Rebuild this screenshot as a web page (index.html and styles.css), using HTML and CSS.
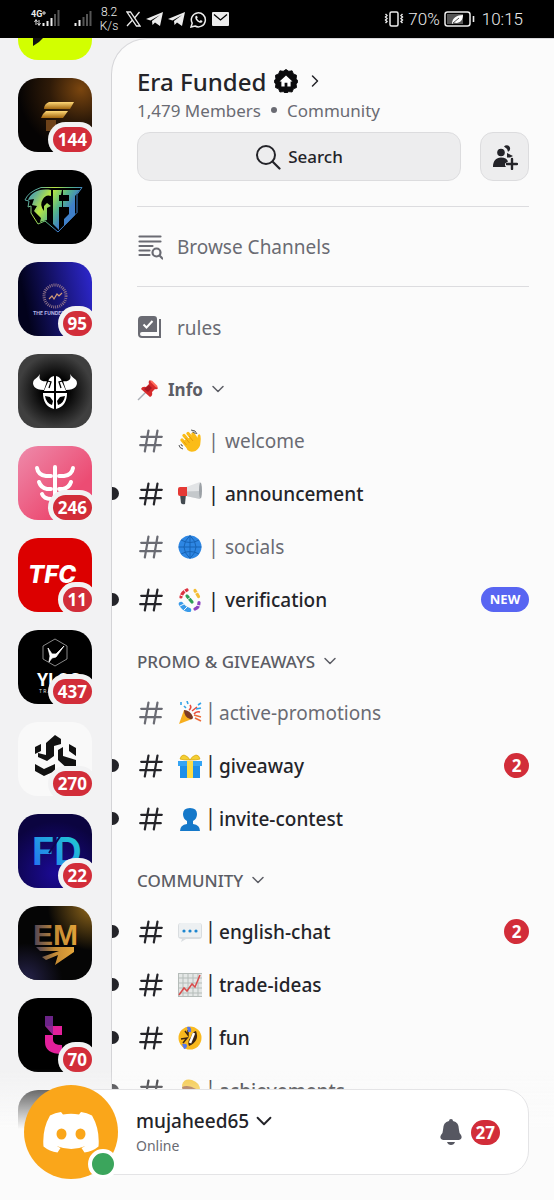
FILE: index.html
```html
<!DOCTYPE html>
<html lang="en">
<head>
  <meta charset="UTF-8" />
  <meta name="viewport" content="width=device-width, initial-scale=1.0"/>
  <title>Era Funded</title>
  <link rel="stylesheet" href="styles.css">
</head>
<body>
  <!-- shared icons -->
  <svg class="sprite" aria-hidden="true">
    <symbol id="hash" viewBox="0 0 24 24">
      <path d="M9.500 1.500 5.800 22.500M18.500 1.500 14.800 22.500M2.200 7.800h20.600M1.200 16.200h20.600" fill="none" stroke="currentColor" stroke-width="2.200" stroke-linecap="round"/>
    </symbol>
    <symbol id="chevron" viewBox="0 0 14 14">
      <path d="M2 4.500 7 9.500 12 4.500" fill="none" stroke="currentColor" stroke-width="1.500" stroke-linecap="round" stroke-linejoin="round"/>
    </symbol>
    <symbol id="plane" viewBox="0 0 17 16">
      <path d="M0 8 17 1 14 15 9 11.500 6.500 14 6 10 14 4 4.500 9.500Z" fill="currentColor"/>
    </symbol>
  </svg>

  <header class="statusbar">
    <svg class="signal" width="32" height="20" viewBox="0 0 32 20">
      <text x="1" y="8" class="net">4G</text>
      <path d="M14 2v4M12 4h4" stroke="#ddd" stroke-width="1"/>
      <path d="M6 11v5M4.500 13 6 10.500 7.500 13M9 11v5M7.500 14 9 16.500 10.500 14" fill="none" stroke="#ddd" stroke-width="1"/>
      <path d="M13.500 14v3M17.500 12v5M21.500 9v8" stroke="#ececec" stroke-width="2"/>
      <path d="M25 5v12M28.500 1v16" stroke="#555" stroke-width="2"/>
    </svg>
    <svg class="signal2" width="18" height="18" viewBox="0 0 18 18">
      <path d="M1.500 13v3M5.500 10v6" stroke="#ececec" stroke-width="2"/>
      <path d="M9.500 7v9M13 4v12M16.500 1v15" stroke="#555" stroke-width="2"/>
    </svg>
    <div class="speed">8.2<br>K/s</div>
    <svg width="15" height="16" viewBox="0 0 15 16"><path d="M1 1h3.500L14 15h-3.500ZM13.500 1 8.500 7M6.500 9 1 15" fill="none" stroke="#ececec" stroke-width="1.300"/></svg>
    <svg width="17" height="16"><use href="#plane"/></svg>
    <svg width="17" height="16"><use href="#plane"/></svg>
    <svg width="17" height="17" viewBox="0 0 17 17">
      <path d="M1 16 2.200 12.200A7 7 0 1 1 5 15Z" fill="none" stroke="#ececec" stroke-width="1.500"/>
      <path d="M6 4.800C4.500 5.600 5.500 8.600 7 10c1.600 1.600 4.500 2.600 5.300 1 .5-1-.4-1.300-1.500-1.900L9.800 10C8.500 9.500 7.600 8.600 7 7.400l.7-.9C7.200 5.200 7 4.400 6 4.800Z" fill="#ececec"/>
    </svg>
    <svg width="17" height="14" viewBox="0 0 17 14"><rect width="17" height="14" rx="1" fill="#ececec"/><path d="M2 2.500 8.500 8 15 2.500" fill="none" stroke="#000" stroke-width="1.300"/></svg>
    <div class="status-right">
      <svg width="20" height="18" viewBox="0 0 20 18">
        <rect x="6" y="2" width="8" height="14" rx="1.500" fill="none" stroke="#ececec" stroke-width="1.500"/>
        <path d="M1.500 4 3 5.500 1.500 7 3 8.500 1.500 10 3 11.500 1.500 13M18.500 4 17 5.500l1.500 1.500L17 8.500l1.500 1.500-1.500 1.500 1.500 1.500" fill="none" stroke="#ececec" stroke-width="1.400"/>
      </svg>
      <span>70%</span>
      <svg width="31" height="16" viewBox="0 0 31 16">
        <rect x="1" y="1" width="25" height="14" rx="2.500" fill="none" stroke="#ececec" stroke-width="1.500"/>
        <rect x="3" y="3" width="16" height="10" fill="#555"/>
        <path d="M8 13C8 7 13 4 19 4 19 10 15 13 10 11.500Z" fill="#fff"/>
        <path d="m9 12 6-5" stroke="#555"/>
        <path d="M29.500 5v6" stroke="#ececec" stroke-width="1.600"/>
      </svg>
      <span class="clock">10:15</span>
    </div>
  </header>

  <main class="app">
    <nav class="servers" aria-label="Servers">
      <a href="#" class="server" aria-label="Server 1">
        <svg viewBox="0 0 74 74"><rect width="74" height="74" fill="#d2ff00"/><path d="M15 50h12l-6 6-6 4Z" fill="#111"/></svg>
      </a>
      <a href="#" class="server" aria-label="Server 2">
        <svg viewBox="0 0 74 74">
          <defs>
            <radialGradient id="g2" cx=".85" cy=".15" r=".85"><stop offset="0" stop-color="#7b460f"/><stop offset=".5" stop-color="#2e1a08"/><stop offset="1" stop-color="#050303"/></radialGradient>
            <linearGradient id="gold" x1="0" y1="0" x2="0" y2="1"><stop offset="0" stop-color="#ffd978"/><stop offset="1" stop-color="#a2660f"/></linearGradient>
          </defs>
          <rect width="74" height="74" fill="url(#g2)"/>
          <path d="M31 24h25l-4 7H26q0-5 5-7Z" fill="url(#gold)"/>
          <path d="M28 33h22l-5 7H23q2-5 5-7Z" fill="url(#gold)"/>
          <path d="M28 42h10v6l-4 5h-6Z" fill="#6e4219"/>
        </svg>
        <span class="badge">144</span>
      </a>
      <a href="#" class="server" aria-label="GFE">
        <svg viewBox="0 0 74 74">
          <defs><linearGradient id="g3" gradientUnits="userSpaceOnUse" x1="12" y1="20" x2="58" y2="50"><stop offset=".1" stop-color="#5aa9a0"/><stop offset=".35" stop-color="#b9e642"/><stop offset=".6" stop-color="#55b58a"/><stop offset=".8" stop-color="#3f7fc9"/></linearGradient></defs>
          <rect width="74" height="74" fill="#000"/>
          <path d="M23 17.500h41l-5 7v18L40 62 27 51l-7 3-7-11V36l-3 1 1-6-4-1q3-8 16-12.500Z" fill="none" stroke="url(#g3)" stroke-width="1"/>
          <path d="M33 20C20 18 13 23 10 30l6-1-2 6 5 1-3 5 7 7-1 4 7-2V38l4-2-4-3-3 3v5q-5-6-1-12 3-5 8-3Z" fill="url(#g3)"/>
          <path d="M35 20h9l-1 5h-2v6h3v6h-3v23l-6-6Z" fill="url(#g3)"/>
          <path d="M45 20h17l-5 6v19l-11 11v-7l5-5v-7h-6v-6h6v-6h-6Z" fill="url(#g3)"/>
        </svg>
      </a>
      <a href="#" class="server" aria-label="The Funded">
        <svg viewBox="0 0 74 74">
          <defs><linearGradient id="g4" x1="0" y1=".6" x2="1" y2=".4"><stop offset=".1" stop-color="#02021c"/><stop offset="1" stop-color="#2b25c4"/></linearGradient></defs>
          <rect width="74" height="74" fill="url(#g4)"/>
          <circle cx="37" cy="34" r="11" fill="none" stroke="#8d7188" stroke-width="3" stroke-dasharray="1 1"/>
          <path d="m31 37 3-3 2 3 3-5 2 2 3-3" fill="none" stroke="#d49b76" stroke-width="1.200"/>
          <text x="15" y="53" font-size="5" fill="#b9b7e6" font-weight="700" font-family="Inter, sans-serif">THE FUNDED</text>
        </svg>
        <span class="badge">95</span>
      </a>
      <a href="#" class="server" aria-label="Viking">
        <svg viewBox="0 0 74 74">
          <defs><radialGradient id="g5"><stop offset=".35" stop-color="#000"/><stop offset="1" stop-color="#3f3f3f"/></radialGradient></defs>
          <rect width="74" height="74" fill="url(#g5)"/>
          <path d="M22 20c-2 6 2 8 7 7l-3 9c-9 0-13-5-10-10 2-2 4-3 6-6ZM52 20c2 6-2 8-7 7l3 9c9 0 13-5 10-10-2-2-4-3-6-6Z" fill="#fff"/>
          <path d="M36 22v15H26q2-5 4-9 1-5 6-6ZM38 22v15h10q-2-5-4-9-1-5-6-6Z" fill="#fff"/>
          <path d="m26 26 7 2-2 6M48 26l-7 2 2 6" fill="none" stroke="#000" stroke-width="1.300"/>
          <path d="M25 39h11v16c-8-2-11-8-11-16ZM49 39H38v16c8-2 11-8 11-16Z" fill="#fff"/>
          <path d="m27 42 5 1 3 4-1 4q-6-2-7-9ZM47 42l-5 1-3 4 1 4q6-2 7-9Z" fill="#000"/>
        </svg>
      </a>
      <a href="#" class="server" aria-label="Server 6">
        <svg viewBox="0 0 74 74">
          <defs><linearGradient id="g6" x1="0" y1="0" x2="1" y2="1"><stop offset="0" stop-color="#ee8bab"/><stop offset=".7" stop-color="#ec4c73"/></linearGradient></defs>
          <rect width="74" height="74" fill="url(#g6)"/>
          <path d="M37 21v34" stroke="#fff" stroke-width="4" stroke-linecap="round"/>
          <path d="M19 22q1 7 9 8h5M55 22q-1 7-9 8h-5M21 36q2 6 8 7h4M53 36q-2 6-8 7h-4M24 48q2 5 9 5M50 48q-2 5-9 5" fill="none" stroke="#fff" stroke-width="4" stroke-linecap="round"/>
        </svg>
        <span class="badge">246</span>
      </a>
      <a href="#" class="server" aria-label="TFC">
        <svg viewBox="0 0 74 74"><rect width="74" height="74" fill="#dc0000"/><text x="10" y="45" font-size="24" font-weight="800" font-style="italic" fill="#fff" font-family="Inter, sans-serif">TFC</text></svg>
        <span class="badge">11</span>
      </a>
      <a href="#" class="server" aria-label="YLOS Trading">
        <svg viewBox="0 0 74 74">
          <rect width="74" height="74" fill="#000"/>
          <path d="m37 9 12 7v13l-12 7-12-7V16Z" fill="none" stroke="#aaa" stroke-width=".8"/>
          <path d="m30 18 4 6h4l8-8-8 11-4 1-3 4 1-6Z" fill="#fff" stroke="#fff" stroke-width=".8"/>
          <text x="19" y="56" font-size="18" font-weight="700" fill="#fff" font-family="'Liberation Sans Narrow', Roboto, sans-serif">YLOS</text>
          <text x="21" y="63" font-size="5" fill="#ddd" font-family="Roboto, sans-serif">T R A D I N G</text>
        </svg>
        <span class="badge">437</span>
      </a>
      <a href="#" class="server" aria-label="Server 9">
        <svg viewBox="0 0 74 74">
          <rect width="74" height="74" fill="#f9f9f9"/>
          <path d="M37 13 43 17V22L36 24V34L29 39 20 35V31L28 33V21ZM17 25 23 22V29L17 32ZM51 22 58 26V34L51 29ZM40 28 45 25V34L58 38V45L51 48 40 38ZM17 42 26 47 37 42V49L26 54 17 49Z" fill="#111"/>
        </svg>
        <span class="badge">270</span>
      </a>
      <a href="#" class="server" aria-label="FD">
        <svg viewBox="0 0 74 74">
          <defs>
            <radialGradient id="g10" cx=".5" cy=".8" r=".7"><stop offset="0" stop-color="#1b0a94"/><stop offset="1" stop-color="#0b0440"/></radialGradient>
            <linearGradient id="g10t" x1="0" y1="1" x2="1" y2="0"><stop offset="0" stop-color="#2468f5"/><stop offset="1" stop-color="#20d9ce"/></linearGradient>
          </defs>
          <rect width="74" height="74" fill="url(#g10)"/>
          <text x="14" y="51" font-size="38" font-weight="700" fill="url(#g10t)" font-family="Inter, sans-serif">FD</text>
          <path d="M31 39 43 21" stroke="#0e0653" stroke-width="2"/>
        </svg>
        <span class="badge">22</span>
      </a>
      <a href="#" class="server" aria-label="EM">
        <svg viewBox="0 0 74 74">
          <defs>
            <radialGradient id="g11" cx="1" cy="0" r=".6"><stop offset="0" stop-color="#94691b"/><stop offset="1" stop-color="#050505"/></radialGradient>
            <radialGradient id="g11b" cx=".1" cy="1" r=".5"><stop offset="0" stop-color="#26234c"/><stop offset="1" stop-color="#26234c" stop-opacity="0"/></radialGradient>
            <linearGradient id="g11t"><stop offset="0" stop-color="#4a4158"/><stop offset=".5" stop-color="#c48a34"/><stop offset="1" stop-color="#e3a53a"/></linearGradient>
          </defs>
          <rect width="74" height="74" fill="url(#g11)"/><rect width="74" height="74" fill="url(#g11b)"/>
          <text x="15" y="39" font-size="30" font-weight="700" fill="url(#g11t)" font-family="'Liberation Sans', sans-serif">EM</text>
          <path d="M18 41h38v5L37 59l3-10-12 5-4-3 17-6H22Z" fill="url(#g11t)"/>
        </svg>
      </a>
      <a href="#" class="server" aria-label="Server 12">
        <svg viewBox="0 0 74 74">
          <rect width="74" height="74" fill="#000"/>
          <path d="M27 18h8v10h-8Z" fill="#6b2487"/><path d="M27 28h8l8 9h-8Z" fill="#8b2590"/>
          <path d="M35 28h9v9h-9ZM27 37h8v5q0 5 9 5v9Q27 56 27 44Z" fill="#e3209b"/>
        </svg>
        <span class="badge">70</span>
      </a>
      <a href="#" class="server" aria-label="Server 13"><svg viewBox="0 0 74 74"><rect width="74" height="74" fill="#1c1c1c"/></svg></a>
    </nav>

    <section class="panel">
      <div class="head">
        <h1>Era Funded</h1>
        <svg width="24" height="24" viewBox="0 0 26 26">
          <path d="m13 1 3 2 3.600-.5 1.400 3.300 3.400 1.500-.4 3.700 2 3-2 3 .4 3.600-3.400 1.400-1.400 3.400-3.600-.4-3 2-3-2-3.600.4L5 22 1.600 20.600 2 17 0 14l2-3-.4-3.700L5 5.800 6.400 2.500 10 3Z" fill="#0b0b0d" stroke="#0b0b0d" transform="translate(0 -.5)"/>
          <path d="m13 7 7 6.500h-2V19h-3.500v-4h-3v4H8v-5.500H6Z" fill="#fff"/>
        </svg>
        <svg class="right" width="14" height="14"><use href="#chevron"/></svg>
      </div>
      <p class="meta"><span>1,479 Members</span><i></i><span>Community</span></p>
      <div class="actions">
        <button class="search">
          <svg width="26" height="26" viewBox="0 0 26 26"><circle cx="11" cy="11" r="9" fill="none" stroke="currentColor" stroke-width="2"/><path d="m17.500 17.500 7 7" stroke="currentColor" stroke-width="2.200" stroke-linecap="round"/></svg>
          Search
        </button>
        <button class="invite" aria-label="Invite people">
          <svg width="26" height="26" viewBox="0 0 26 26" fill="currentColor">
            <circle cx="9" cy="8.500" r="3.800"/>
            <path d="M1 23c0-6 3-9.500 8-9.500 4 0 6 1.600 7 4l-3 2v2l1 1.500Z"/>
            <path d="M12 2.500a3.400 3.400 0 1 1 4 5.200Q15 4 12 2.500ZM15 9l6 3-3 1.500h-3Z"/>
            <path d="M20 15v10M15 20h10" stroke="currentColor" stroke-width="2.400" stroke-linecap="round"/>
          </svg>
        </button>
      </div>
      <a href="#" class="browse">
        <svg width="26" height="26" viewBox="0 0 26 26" fill="none" stroke="currentColor" stroke-width="2.200" stroke-linecap="round"><path d="M2.500 2.500h21M2.500 7.500h21M2.500 12h13M2.500 16.500h10M2.500 21h10"/><circle cx="19.500" cy="18.500" r="4"/><path d="m22.500 21.500 3 3"/></svg>
        Browse Channels
      </a>
      <a href="#" class="rules">
        <svg width="26" height="26" viewBox="0 0 26 26"><path d="M5 1h12q3 0 3 3v13H5q-2 0-2 2t2 2h17V4h2v19H5q-4 0-4-4V5q0-4 4-4Z" fill="currentColor"/><path d="m6.500 9.500 3 3 6-6.500" fill="none" stroke="#fff" stroke-width="2"/></svg>
        rules
      </a>

      <h2 class="info">
        <svg width="23" height="23" viewBox="0 0 23 23"><path d="m9 14-8 8" stroke="#a9adb5" stroke-width="1.500"/><path d="m13 2 8 8q-1 2-3 1l-3 3q1 4-2 5L4 11q1-3 5-2l3-3q-1-3 1-4Z" fill="#d62a2b"/><path d="m12 7 3 3-4 4-4-3Z" fill="#a91522"/><path d="m14 3 6 6" stroke="#ff6a5c" stroke-width="2"/></svg>
        Info
        <svg width="14" height="14"><use href="#chevron"/></svg>
      </h2>
      <ul class="channels spaced">
        <li><a href="#" class="channel">
          <svg class="hash"><use href="#hash"/></svg>
          <svg class="emoji" viewBox="0 0 24 24"><path d="M4 11 9 17M6 6.500l6 7M10 4.500l6 7M15 5l4 6" stroke="#fbbc18" stroke-width="3.400" stroke-linecap="round"/><path d="m5 12 10-5 4 3 1-4q2-2 2.500 1 .5 3 0 6 0 6-5 9-5 2-8-1Z" fill="#fbbc18"/><path d="m7.500 9 4 5M11 7l4 5M5.500 12.500l3 3.500" stroke="#e49a0c"/><path d="M13 1q5 0 6 4M14.500 3q2 0 3 2M1 16q0 3 4 4M3 15q0 2 2 2" fill="none" stroke="#555"/></svg>
          <span class="sep">|</span><span class="name">welcome</span></a></li>
        <li><a href="#" class="channel unread">
          <svg class="hash"><use href="#hash"/></svg>
          <svg class="emoji" viewBox="0 0 24 24"><path d="M2 12h6l-1 10q-3 1-4-1Z" fill="#434a50"/><path d="m8 5 14-5v17L8 14Z" fill="#e2e4e6"/><path d="M8 9.500 22 9v8L8 14Z" fill="#c4c8cb"/><path d="M2 5h7v9H2q-2 0-2-2V7q0-2 2-2Z" fill="#e53935"/><ellipse cx="22.500" cy="8.500" rx="1.500" ry="8" fill="#9ca1a6"/></svg>
          <span class="sep">|</span><span class="name">announcement</span></a></li>
        <li><a href="#" class="channel">
          <svg class="hash"><use href="#hash"/></svg>
          <svg class="emoji" viewBox="0 0 24 24"><circle cx="12" cy="12" r="11.500" fill="#2d86e3"/><path d="M12 .5v23M.5 12h23M3 5q9 5 18 0M3 19q9-5 18 0M12 .5Q0 12 12 23.500Q24 12 12 .5" fill="none" stroke="#1763b5"/></svg>
          <span class="sep">|</span><span class="name">socials</span></a></li>
        <li><a href="#" class="channel unread">
          <svg class="hash"><use href="#hash"/></svg>
          <svg class="emoji" viewBox="0 0 24 24" fill="none" stroke-width="3.200" stroke-linecap="round"><path d="M3 9q1-5 6-7" stroke="#dc3340"/><path d="M3 16q3 5 8 6" stroke="#3a9bea" stroke-width="4.500"/><path d="m9 8 5 6" stroke="#2e9d58"/><path d="m17 2.500 3.500 6" stroke="#f4bd35"/><path d="M21 14.500q0 5-4 6.500" stroke="#8e44c0"/><path d="M2.500 7 7 9M6 2l3 4M2 18l4-2M6 22l3-3M9 12l4-3M16 6l4-2M18 17l4 1" stroke="#fbfbfb" stroke-width="1"/></svg>
          <span class="sep">|</span><span class="name">verification</span><span class="new">NEW</span></a></li>
      </ul>

      <h2>PROMO &amp; GIVEAWAYS <svg width="14" height="14"><use href="#chevron"/></svg></h2>
      <ul class="channels">
        <li><a href="#" class="channel">
          <svg class="hash"><use href="#hash"/></svg>
          <svg class="emoji" viewBox="0 0 24 24"><path d="m1 23 5-14q5 1 8 9Z" fill="#f7ae1d"/><path d="M6 9q6 0 9 7 0 3-3 2-6-2-6-9Z" fill="#7b3a25"/><path d="M11 9q3-2 1-5M16 13q2-3 6-2M14 10l5-4" fill="none" stroke="#e84b3c" stroke-width="1.600"/><path d="M3 1v3M9 0l1 3M18 8l5-1M20 4l3-2M6 5l2 2" stroke="#33a3e8" stroke-width="1.600"/><path d="m17 17 6 3M16 14l7 2" stroke="#ee6a39" stroke-width="1.600"/></svg>
          <span class="sep">│</span><span class="name">active-promotions</span></a></li>
        <li><a href="#" class="channel unread">
          <svg class="hash"><use href="#hash"/></svg>
          <svg class="emoji" viewBox="0 0 24 24"><path d="M2 9h20v15H2Z" fill="#1e8fe8"/><path d="M0 7h24v5H0Z" fill="#35a4f4"/><path d="M9 7h6v17H9Z" fill="#fddc45"/><path d="M12 6Q5 6 2 5q1-4 4-4 4 1 6 5Q14 2 18 1q3 0 4 4-3 1-10 1Z" fill="#f4cf33" stroke="#d9a914" stroke-width=".8"/></svg>
          <span class="sep">│</span><span class="name">giveaway</span><span class="count">2</span></a></li>
        <li><a href="#" class="channel unread">
          <svg class="hash"><use href="#hash"/></svg>
          <svg class="emoji" viewBox="0 0 24 24"><path d="M2 24q0-6 7-7v-3Q5 12 5 7q0-6 7-6t7 6q0 5-4 7v3q7 1 7 7Z" fill="#1578c9"/></svg>
          <span class="sep">│</span><span class="name">invite-contest</span></a></li>
      </ul>

      <h2>COMMUNITY <svg width="14" height="14"><use href="#chevron"/></svg></h2>
      <ul class="channels">
        <li><a href="#" class="channel unread">
          <svg class="hash"><use href="#hash"/></svg>
          <svg class="emoji" viewBox="0 0 24 24"><path d="M3 3h18q3 0 3 3v10q0 3-3 3H8l-5 3 1-3Q0 19 0 16V6q0-3 3-3Z" fill="#d9dde0"/><path d="M3 3h18q2 0 2 2v12H1V5q0-2 2-2Z" fill="#edf0f2"/><g fill="#1d86d0"><circle cx="6" cy="11" r="1.600"/><circle cx="12" cy="11" r="1.600"/><circle cx="18" cy="11" r="1.600"/></g></svg>
          <span class="sep">│</span><span class="name">english-chat</span><span class="count">2</span></a></li>
        <li><a href="#" class="channel unread">
          <svg class="hash"><use href="#hash"/></svg>
          <svg class="emoji" viewBox="0 0 24 24"><path d="M0 0h24v24H0Z" fill="#e4e7e6"/><path d="M.5 0v24M5 0v24M10 0v24M15 0v24M20 0v24M0 .5h24M0 5h24M0 10h24M0 15h24M0 20h24M0 23.500h24" stroke="#b5bcb9"/><path d="m1 22 5-7 3 3 5-7 3 3 5-12" fill="none" stroke="#d94b4b" stroke-width="1.500"/></svg>
          <span class="sep">│</span><span class="name">trade-ideas</span></a></li>
        <li><a href="#" class="channel unread">
          <svg class="hash"><use href="#hash"/></svg>
          <svg class="emoji" viewBox="0 0 24 24"><circle cx="12" cy="12" r="11.500" fill="#f9b91e"/><path d="M18 5q4 10-7 15-2-5 2-9 1-5 5-6Z" fill="#3b2412"/><path d="m16 7-4 10" stroke="#fff" stroke-width="2.500"/><path d="m7 5 3 4V4M3 13l6-1-4 5" fill="none" stroke="#3b2412" stroke-width="1.500"/><path d="M9 1q5-1 4 5l-3 0ZM4 18q4-1 5 1 0 4-3 4Z" fill="#5577ee"/></svg>
          <span class="sep">│</span><span class="name">fun</span></a></li>
        <li><a href="#" class="channel unread">
          <svg class="hash"><use href="#hash"/></svg>
          <svg class="emoji" viewBox="0 0 24 24"><path d="M4 6Q6-1 14 1q9 3 8 12l-5 9H6Z" fill="#f4c53c"/><path d="M4 8q6-3 14 2l-2 9H7Z" fill="#9b5c38"/><path d="M8 11h8v7H9Z" fill="#eee"/></svg>
          <span class="sep">│</span><span class="name">achievements</span></a></li>
      </ul>
    </section>
  </main>

  <footer class="dock">
    <div class="user">
      <button class="avatar" aria-label="Profile">
        <svg width="56" height="42" viewBox="0 0 56 42">
          <path d="M18 1 20 3.500q8-1.500 16 0L38 1q6 .5 11 3.500 8 14 6.500 31-6 5-14 6L38.500 37l4-2q-14 6-29 0l4 2-3 4.500q-8-1-14-6Q-1 18.500 7 4.500 12 1.500 18 1Z" fill="#fff"/>
          <ellipse cx="18.500" cy="23" rx="5" ry="5.500" fill="#faa61a"/><ellipse cx="37.500" cy="23" rx="5" ry="5.500" fill="#faa61a"/>
        </svg>
        <span class="online"></span>
      </button>
      <div class="who">
        <button class="username">mujaheed65 <svg width="18" height="18"><use href="#chevron"/></svg></button>
        <span class="state">Online</span>
      </div>
      <a href="#" class="alerts" aria-label="Notifications">
        <svg width="22" height="28" viewBox="0 0 22 28" fill="#565761"><path d="M11 1q2 0 2 2 6 1 6 9 0 3 2 5 2 4-2 5H3q-4-1-2-5 2-2 2-5 0-8 6-9 0-2 2-2ZM7 24h8q-1 3-4 3t-4-3Z"/></svg>
        <span class="badge">27</span>
      </a>
    </div>
  </footer>
</body>
</html>
```
FILE: styles.css
```css
* {
  box-sizing: border-box;
}
body {
  margin: 0;
  height: 100vh;
  overflow: hidden;
  display: flex;
  flex-direction: column;
  background: #f2f2f3;
  color: #242429;
  font-family: "Noto Sans", sans-serif;
}
a {
  color: inherit;
  text-decoration: none;
}
button {
  font: inherit;
  color: inherit;
  border: none;
  background: none;
  padding: 0;
  cursor: pointer;
}
svg {
  flex: none;
}
.sprite {
  position: absolute;
  width: 0;
  height: 0;
}

/* phone status bar */
.statusbar {
  flex: none;
  height: 38px;
  padding: 0 31px 0 30px;
  display: flex;
  align-items: center;
  gap: 5px;
  background: #000;
  color: #ececec;
  font-family: Roboto, sans-serif;
  font-weight: 300;
  z-index: 2;
}
.net {
  font-size: 9px;
  font-weight: 700;
  fill: #ececec;
}
.signal2 {
  margin-left: 7px;
}
.speed {
  width: 24px;
  font-size: 12px;
  line-height: 14px;
  text-align: center;
}
.status-right {
  margin-left: auto;
  display: flex;
  align-items: center;
  gap: 4px;
  font-size: 17px;
}
.clock {
  margin-left: 3px;
}

.app {
  flex: 1;
  min-height: 0;
  display: flex;
}

/* server rail */
.servers {
  flex: none;
  width: 111px;
  margin-top: -52px;
  padding-left: 18px;
  display: flex;
  flex-direction: column;
  gap: 18px;
}
.server {
  position: relative;
  flex: none;
  width: 74px;
  height: 74px;
}
.server svg {
  display: block;
  border-radius: 20px;
}
.badge {
  height: 25px;
  padding: 0 5px;
  border-radius: 13px;
  background: #d22d39;
  color: #fff;
  font-size: 17px;
  font-weight: 700;
  line-height: 25px;
}
.server .badge {
  position: absolute;
  right: 0;
  bottom: 0;
  box-shadow: 0 0 0 5px #f2f2f3;
}

/* channel panel */
.panel {
  flex: 1;
  min-width: 0;
  overflow: hidden;
  padding: 25px 25px 0;
  border-top: 1px solid #d9d9dc;
  border-left: 1px solid #d4d4d7;
  border-top-left-radius: 36px;
  background: #fbfbfb;
}
.head {
  display: flex;
  align-items: center;
  gap: 8px;
  height: 34px;
}
h1 {
  margin: 0;
  font-size: 24px;
  font-weight: 500;
}
.right {
  margin-left: 2px;
  transform: rotate(-90deg);
}
.meta {
  display: flex;
  align-items: center;
  gap: 10px;
  height: 24px;
  margin: 0;
  color: #6a6b73;
  font-size: 17px;
}
.meta i {
  width: 6px;
  height: 6px;
  border-radius: 50%;
  background: #6a6b73;
}
.actions {
  display: flex;
  gap: 19px;
  margin-top: 10px;
}
.search,
.invite {
  height: 49px;
  border: 1px solid #dcdcde;
  border-radius: 13px;
  background: #ededee;
}
.search {
  flex: 1;
  display: flex;
  align-items: center;
  justify-content: center;
  gap: 7px;
  font-size: 17px;
  font-weight: 500;
}
.invite {
  width: 49px;
  display: flex;
  align-items: center;
  justify-content: center;
}
.browse,
.rules {
  display: flex;
  align-items: center;
  gap: 14px;
  height: 81px;
  color: #6a6b73;
  font-size: 19px;
}
.browse {
  margin-top: 25px;
  border: solid #dcdcdf;
  border-width: 1px 0;
}
h2 {
  display: flex;
  align-items: center;
  gap: 8px;
  height: 50px;
  margin: 0;
  color: #5c5d65;
  font-size: 17px;
  font-weight: 500;
}
.info {
  margin-top: -4px;
  font-weight: 700;
}
.channels {
  margin: 0 0 10px;
  padding: 0;
  list-style: none;
}
.channel {
  position: relative;
  display: flex;
  align-items: center;
  height: 53px;
  color: #6a6b73;
  font-size: 19px;
}
.hash {
  width: 24px;
  height: 24px;
  margin: 0 15px 0 2px;
}
.emoji {
  width: 24px;
  height: 24px;
}
.sep {
  width: 17px;
  text-align: center;
  font-family: "DejaVu Sans Mono", monospace;
}
.spaced .sep {
  width: 23px;
  font-family: inherit;
}
.unread {
  color: #242429;
  font-weight: 500;
}
.unread::before {
  content: "";
  position: absolute;
  left: -31px;
  width: 13px;
  height: 13px;
  border-radius: 50%;
  background: #242429;
}
.new,
.count {
  margin-left: auto;
  color: #fff;
  height: 25px;
  line-height: 25px;
  border-radius: 13px;
  font-weight: 700;
  text-align: center;
}
.new {
  width: 48px;
  background: #5865f2;
  font-size: 13px;
}
.count {
  width: 25px;
  background: #d22d39;
  font-size: 17px;
}

/* user bar at the bottom, the list fades out under it */
.dock {
  position: fixed;
  left: 0;
  right: 0;
  bottom: 0;
  padding: 20px 25px 25px 70px;
  background: linear-gradient(#fbfbfb00, #fbfbfb 60px);
}
.user {
  display: flex;
  align-items: center;
  height: 86px;
  padding-right: 28px;
  border: 1px solid #e4e4e6;
  border-radius: 24px;
  background: #fff;
}
.avatar {
  position: relative;
  flex: none;
  width: 94px;
  height: 94px;
  margin-left: -47px;
  border-radius: 50%;
  background: #faa61a;
  display: flex;
  align-items: center;
  justify-content: center;
}
.online {
  position: absolute;
  right: 0;
  bottom: 0;
  width: 30px;
  height: 30px;
  border: 4px solid #fff;
  border-radius: 50%;
  background: #3ba55c;
}
.who {
  flex: 1;
  margin-left: 18px;
}
.username {
  display: flex;
  align-items: center;
  gap: 6px;
  height: 28px;
  font-size: 19px;
  font-weight: 500;
}
.state {
  display: block;
  color: #6a6b73;
  font-size: 14px;
  line-height: 22px;
}
.alerts {
  display: flex;
  align-items: center;
  gap: 9px;
}
```
